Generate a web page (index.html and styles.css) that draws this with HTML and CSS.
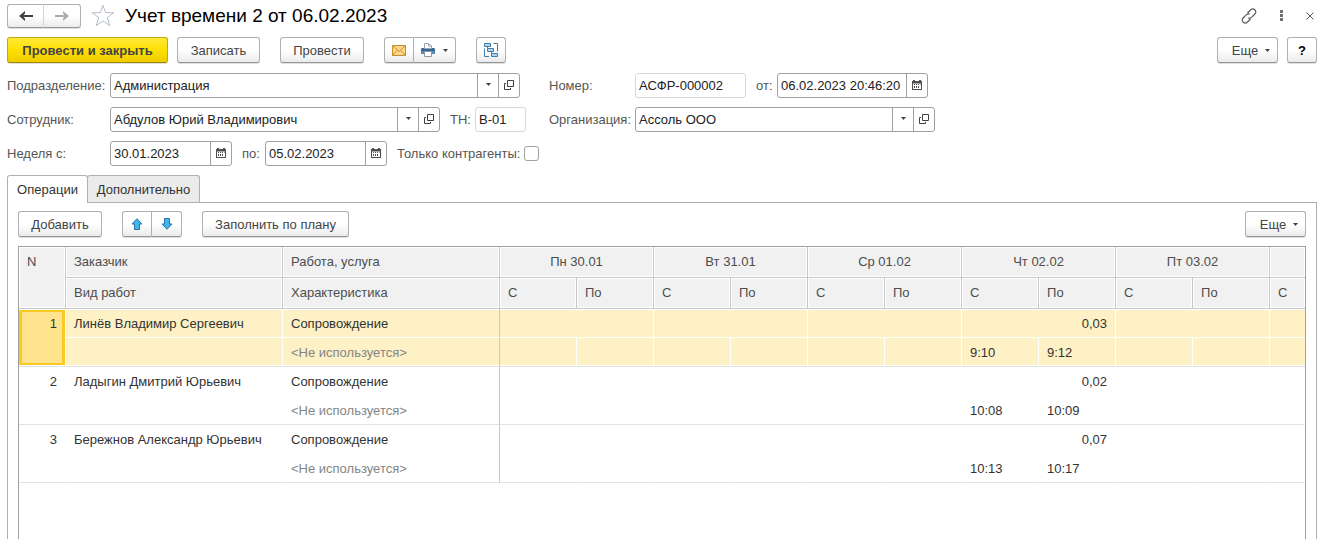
FILE: index.html
```html
<!DOCTYPE html>
<html lang="ru">
<head>
<meta charset="utf-8">
<title>Учет времени 2 от 06.02.2023</title>
<link rel="stylesheet" href="styles.css">
</head>
<body>
<svg class="defs" aria-hidden="true">
  <symbol id="open" viewBox="0 0 10 10"><path d="M3.500.5h6v6h-6zM2 3.500H.5v6h6V8" fill="none" stroke="#404040"/></symbol>
  <symbol id="cal" viewBox="0 0 10 10"><path d="M0 1h1V0h2v1h4V0h2v1h1v9H0z" fill="#505050"/><path d="M1 3h8v6H1z" fill="#fff"/><path d="M2 4h1v1H2zM4 4h1v1H4zM6 4h1v1H6zM2 6h1v2H2zM4 6h1v2H4zM6 6h1v2H6zM8 4h.5v1H8zM1 3h8v.5H1z" fill="#505050"/></symbol>
  <symbol id="caret" viewBox="0 0 5 3"><path d="M0 0h5L2.500 3z" fill="#404040"/></symbol>
</svg>
<div class="page">
  <header class="titlebar">
    <div class="group nav">
      <button class="btn" aria-label="Назад"><svg width="14" height="10" viewBox="0 0 14 10"><path d="M6 0v2.500L4.500 4H14v2H4.500L6 7.500V10L0 5z" fill="#404040"/></svg></button>
      <button class="btn" aria-label="Вперед"><svg width="14" height="10" viewBox="0 0 14 10"><path d="M8 0v2.500L9.500 4H0v2h9.500L8 7.500V10l6-5z" fill="#ababab"/></svg></button>
    </div>
    <button class="plain" aria-label="В избранное"><svg width="24" height="23" viewBox="0 0 24 23"><path d="M12 1.500l2.700 7.200h8.100l-6.500 4.900 2.400 8L12 17l-6.700 4.600 2.400-8-6.500-4.900h8.100z" fill="none" stroke="#b4bcc4"/></svg></button>
    <h1>Учет времени 2 от 06.02.2023</h1>
    <div class="window-tools">
      <button class="plain" aria-label="Ссылка"><svg width="16" height="16" viewBox="0 0 16 16" fill="none" stroke="#5a5a5a" stroke-width="1.200"><path d="M6.500 5l3-3c1.200-1.200 3-1.400 4.300-.2 1.300 1.200 1.300 3 .1 4.200L10.500 9.400c-1 .9-2.200 1-3.200.5M9.500 11l-3 3c-1.200 1.200-3 1.400-4.300.2-1.300-1.200-1.300-3-.1-4.200l3.400-3.400c1-.9 2.200-1 3.200-.5"/></svg></button>
      <button class="plain" aria-label="Меню"><svg width="3" height="11" viewBox="0 0 3 11"><path d="M0 0h3v3H0zM0 4h3v3H0zM0 8h3v3H0z" fill="#707070"/></svg></button>
      <button class="plain" aria-label="Закрыть"><svg width="8" height="8" viewBox="0 0 8 8"><path d="M.5.5l7 7M7.500.5l-7 7" stroke="#555"/></svg></button>
    </div>
  </header>

  <div class="toolbar">
    <button class="btn primary">Провести и закрыть</button>
    <button class="btn save">Записать</button>
    <button class="btn post">Провести</button>
    <div class="group spaced">
      <button class="btn icon" aria-label="Отправить"><svg width="14" height="11" viewBox="0 0 14 11"><path d="M.5.5h13v10H.5z" fill="#fcd98b" stroke="#c98a2b"/><path d="M1 1l6 5.500L13 1M1 10l4-4.500M13 10L9 5.500" fill="none" stroke="#c98a2b"/></svg></button>
      <button class="btn print" aria-label="Печать"><svg width="14" height="14" viewBox="0 0 14 14"><path d="M1 5h12l1 1v5H0V6z" fill="#35679a"/><path d="M0 8h14v3H0z" fill="#5b8ab8"/><path d="M3.500 5.500v-5h4l3 2.500v2.500z" fill="#fff" stroke="#9aa5b0"/><path d="M7.500.5V3h3" fill="none" stroke="#9aa5b0"/><path d="M3.500 8.500h7v5h-7z" fill="#fff" stroke="#8b98a5"/></svg><svg width="5" height="3"><use href="#caret"/></svg></button>
    </div>
    <button class="btn icon" aria-label="Структура подчиненности"><svg width="14" height="14" viewBox="0 0 14 14" fill="#b8d3ea" stroke="#3d7eb0"><path d="M.5.500h6v3h-6zM3.500 5.500h6v3h-6zM7.500 10.500h6v3h-6zM3.500 3.500v2M7.500 8.500v2"/><path d="M9.500.5h4v8M5 13.500H.5v-8" fill="none"/></svg></button>
    <span class="grow"></span>
    <button class="btn more">Еще<svg width="5" height="3"><use href="#caret"/></svg></button>
    <button class="btn icon help">?</button>
  </div>

  <form class="fields">
    <div class="line">
      <label for="dept">Подразделение:</label>
      <div class="combo dept"><input id="dept" value="Администрация"><button type="button" aria-label="Выбрать"><svg width="5" height="3"><use href="#caret"/></svg></button><button type="button" aria-label="Открыть"><svg width="10" height="10"><use href="#open"/></svg></button></div>
    </div>
    <div class="line">
      <label for="num">Номер:</label>
      <div class="combo locked num"><input id="num" value="АСФР-000002" readonly></div>
      <label class="short" for="date">от:</label>
      <div class="combo date"><input id="date" value="06.02.2023 20:46:20"><button type="button" aria-label="Календарь"><svg width="10" height="10"><use href="#cal"/></svg></button></div>
    </div>
    <div class="line">
      <label for="emp">Сотрудник:</label>
      <div class="combo emp"><input id="emp" value="Абдулов Юрий Владимирович"><button type="button" aria-label="Выбрать"><svg width="5" height="3"><use href="#caret"/></svg></button><button type="button" aria-label="Открыть"><svg width="10" height="10"><use href="#open"/></svg></button></div>
      <label class="short tn" for="tn">ТН:</label>
      <div class="combo locked tnbox"><input id="tn" value="В-01" readonly></div>
    </div>
    <div class="line">
      <label for="org">Организация:</label>
      <div class="combo org"><input id="org" value="Ассоль ООО"><button type="button" aria-label="Выбрать"><svg width="5" height="3"><use href="#caret"/></svg></button><button type="button" aria-label="Открыть"><svg width="10" height="10"><use href="#open"/></svg></button></div>
    </div>
    <div class="line">
      <label for="from">Неделя с:</label>
      <div class="combo week"><input id="from" value="30.01.2023"><button type="button" aria-label="Календарь"><svg width="10" height="10"><use href="#cal"/></svg></button></div>
      <label class="short to" for="to">по:</label>
      <div class="combo week"><input id="to" value="05.02.2023"><button type="button" aria-label="Календарь"><svg width="10" height="10"><use href="#cal"/></svg></button></div>
      <label class="short only" for="only">Только контрагенты:</label>
      <input class="check" type="checkbox" id="only">
    </div>
  </form>

  <div class="tabs" role="tablist">
    <button class="tab active" role="tab" aria-selected="true">Операции</button>
    <button class="tab extra" role="tab" aria-selected="false">Дополнительно</button>
  </div>
  <main class="panel">
    <div class="toolbar inner">
      <button class="btn add">Добавить</button>
      <div class="group spaced">
        <button class="btn icon" aria-label="Вверх"><svg width="12" height="12" viewBox="0 0 12 12"><path d="M6 .7l5 5.300H8.500v5.500h-5V6H1z" fill="#45b1ee" stroke="#2677a8"/></svg></button>
        <button class="btn icon" aria-label="Вниз"><svg width="12" height="12" viewBox="0 0 12 12"><path d="M6 11.300L11 6H8.500V.5h-5V6H1z" fill="#45b1ee" stroke="#2677a8"/></svg></button>
      </div>
      <button class="btn fill">Заполнить по плану</button>
      <span class="grow"></span>
      <button class="btn more">Еще<svg width="5" height="3"><use href="#caret"/></svg></button>
    </div>
    <div class="grid">
      <table>
        <colgroup><col class="c-n"><col class="c-wide" span="2"><col class="c-time" span="10"><col></colgroup>
        <thead>
          <tr><th rowspan="2" class="n">N</th><th>Заказчик</th><th class="fix">Работа, услуга</th><th colspan="2" class="day">Пн 30.01</th><th colspan="2" class="day">Вт 31.01</th><th colspan="2" class="day">Ср 01.02</th><th colspan="2" class="day">Чт 02.02</th><th colspan="2" class="day">Пт 03.02</th><th></th></tr>
          <tr><th>Вид работ</th><th class="fix">Характеристика</th><th>С</th><th>По</th><th>С</th><th>По</th><th>С</th><th>По</th><th>С</th><th>По</th><th>С</th><th>По</th><th>С</th></tr>
        </thead>
        <tbody class="selected">
          <tr><td rowspan="2" class="n">1</td><td>Линёв Владимир Сергеевич</td><td class="fix">Сопровождение</td><td colspan="2"></td><td colspan="2"></td><td colspan="2"></td><td colspan="2" class="sum">0,03</td><td colspan="2"></td><td></td></tr>
          <tr><td></td><td class="fix unused">&lt;Не используется&gt;</td><td></td><td></td><td></td><td></td><td></td><td></td><td>9:10</td><td>9:12</td><td></td><td></td><td></td></tr>
        </tbody>
        <tbody>
          <tr><td rowspan="2" class="n">2</td><td>Ладыгин Дмитрий Юрьевич</td><td class="fix">Сопровождение</td><td colspan="2"></td><td colspan="2"></td><td colspan="2"></td><td colspan="2" class="sum">0,02</td><td colspan="2"></td><td></td></tr>
          <tr><td></td><td class="fix unused">&lt;Не используется&gt;</td><td></td><td></td><td></td><td></td><td></td><td></td><td>10:08</td><td>10:09</td><td></td><td></td><td></td></tr>
        </tbody>
        <tbody>
          <tr><td rowspan="2" class="n">3</td><td>Бережнов Александр Юрьевич</td><td class="fix">Сопровождение</td><td colspan="2"></td><td colspan="2"></td><td colspan="2"></td><td colspan="2" class="sum">0,07</td><td colspan="2"></td><td></td></tr>
          <tr><td></td><td class="fix unused">&lt;Не используется&gt;</td><td></td><td></td><td></td><td></td><td></td><td></td><td>10:13</td><td>10:17</td><td></td><td></td><td></td></tr>
        </tbody>
      </table>
    </div>
  </main>
</div>
</body>
</html>
```
FILE: styles.css
```css
* { box-sizing: border-box; }
body {
  margin: 0;
  background: #fff;
  color: #333;
  font-family: "Liberation Sans", Arial, sans-serif;
  font-size: 13px;
}
button, input { font: inherit; color: inherit; }
svg { display: block; flex: none; }
.defs { position: absolute; width: 0; height: 0; }
.page {
  display: flex;
  flex-direction: column;
  height: 100vh;
  padding: 3px 16px 0 7px;
  overflow: hidden;
}
.grow { flex: 1; }

.btn {
  display: flex;
  align-items: center;
  justify-content: center;
  height: 26px;
  padding: 0;
  border: 1px solid #b0b0b0;
  border-bottom-color: #959595;
  border-radius: 3px;
  background: linear-gradient(#fff 50%, #ebebeb);
  box-shadow: 0 1px 0 #e0e0e0;
  color: #444;
  white-space: nowrap;
}
.group { display: flex; }
.group .btn:first-child { border-radius: 3px 0 0 3px; }
.group .btn:last-child { border-radius: 0 3px 3px 0; border-left: 0; }
.plain { padding: 0; border: 0; background: none; }

.titlebar { display: flex; align-items: center; height: 25px; }
.nav { margin-right: 10px; }
.nav .btn { width: 37px; height: 24px; }
.nav .btn:first-child { border-right-color: #d5d5d5; }
h1 { margin: 0 0 0 10px; color: #000; font-size: 19px; font-weight: 400; }
.window-tools { display: flex; align-items: center; gap: 23px; margin-left: auto; padding-right: 3px; }

.toolbar { display: flex; margin-top: 9px; }
.primary {
  width: 161px;
  margin-right: 9px;
  border-color: #c8a800;
  border-bottom-color: #a08800;
  background: linear-gradient(#ffe93b, #fee000 50%, #efcc00);
  font-weight: 700;
}
.save { width: 83px; margin-right: 20px; }
.post { width: 84px; }
.spaced { margin: 0 20px; }
.icon { width: 30px; }
.print { gap: 8px; width: 42px; }
.more { gap: 7px; width: 61px; padding-left: 7px; }
.help { margin-left: 9px; color: #000; font-weight: 700; }

.fields {
  display: grid;
  grid-template-columns: 542px 1fr;
  row-gap: 9px;
  margin-top: 10px;
}
.line { display: flex; align-items: center; height: 25px; color: #555; }
.line label { flex: none; width: 103px; white-space: nowrap; }
.line:nth-child(even) label { width: 86px; }
.line .short, .line:nth-child(even) .short { width: 21px; margin-left: 10px; }
.line .tn { width: 25px; }
.line .to { width: 23px; }
.line .only { width: 127px; }
.combo {
  display: flex;
  height: 25px;
  border: 1px solid #a0a0a0;
  border-radius: 3px;
  background: #fff;
}
.combo input {
  flex: 1;
  min-width: 0;
  padding: 0 3px;
  border: 0;
  background: none;
  color: #222;
  outline: 0;
}
.combo button {
  display: flex;
  align-items: center;
  justify-content: center;
  width: 21px;
  padding: 0 0 2px;
  border: 0;
  border-left: 1px solid #a0a0a0;
  background: none;
}
.locked { border-color: #d8d8d8; }
.dept { width: 410px; }
.emp { width: 330px; }
.tnbox { width: 51px; }
.num { width: 111px; }
.date { width: 151px; }
.org { width: 300px; }
.week { width: 122px; }
.check {
  appearance: none;
  width: 15px;
  height: 15px;
  margin: 0;
  border: 1px solid #a0a0a0;
  border-radius: 3px;
}

.tabs { display: flex; height: 27px; margin-top: 9px; }
.tab {
  padding: 0;
  border: 1px solid #b0b0b0;
  border-bottom: 0;
  border-radius: 3px 3px 0 0;
  background: #ebebeb;
}
.active { z-index: 1; width: 81px; margin-bottom: -1px; background: #fff; }
.extra { width: 113px; margin-left: -1px; }
.panel {
  display: flex;
  flex: 1;
  flex-direction: column;
  min-height: 0;
  padding: 0 10px;
  border: 1px solid #b0b0b0;
  border-bottom: 0;
}
.inner { margin-top: 8px; }
.add { width: 84px; }
.fill { width: 147px; }

.grid {
  flex: 1;
  min-height: 0;
  margin-top: 9px;
  overflow: hidden;
  border: 1px solid #a0a0a0;
  border-bottom: 0;
}
table { width: 100%; border-spacing: 0; table-layout: fixed; }
.c-n { width: 47px; }
.c-wide { width: 217px; }
.c-time { width: 77px; }
th, td { padding: 0 8px; text-align: left; white-space: nowrap; }
th {
  height: 31px;
  padding-bottom: 2px;
  border: solid #c8c8c8;
  border-width: 0 1px 1px 0;
  background: #f1f1f1;
  box-shadow: inset 0 0 0 1px #fff;
  color: #4d4d4d;
  font-weight: 400;
}
th:last-child, .selected td:last-child { border-right: 0; }
th.n { padding-top: 7px; vertical-align: top; }
.day { text-align: center; }
td { height: 29px; border-right: 1px solid transparent; }
td.n { padding-top: 7px; text-align: right; vertical-align: top; }
td.n, tr:last-child td { border-bottom: 1px solid #e2e2e2; }
td.fix { border-right-color: #c8c8c8; }
.sum { text-align: right; }
.unused { color: #858585; }
.selected td {
  border-right-color: #fff;
  background: #fdf1c5;
  background-clip: padding-box;
}
.selected tr:first-child td { border-bottom: 1px solid #fff; box-shadow: inset 0 1px 0 #fff; }
.selected tr:last-child td { box-shadow: inset 0 -1px 0 #fff; }
.selected td.fix { border-right-color: #c8c8c8; }
.selected tr:first-child td.n {
  border-bottom-color: #e2e2e2;
  background: #ffe48d;
  box-shadow: inset 0 1px 0 #fff, inset 0 -1px 0 #fff, inset 0 0 0 3px #fbc924;
}
```
